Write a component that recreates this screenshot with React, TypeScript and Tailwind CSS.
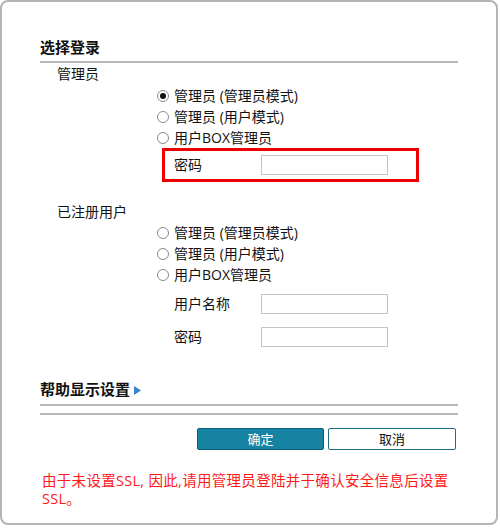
import React from "react";

const font = { fontFamily: '"Open Sans", "Noto Sans CJK SC", sans-serif' };

function Radio({ checked, label }: { checked?: boolean; label: string }) {
  return (
    <div className="flex h-[21px] items-center pl-[117px]">
      <span className="flex h-[12px] w-[12px] items-center justify-center rounded-full border border-[#8a8a8a] bg-white">
        {checked && <span className="h-[6px] w-[6px] rounded-full bg-[#111]" />}
      </span>
      <span className="ml-[5px] text-[14px] leading-[21px] text-[#111]">{label}</span>
    </div>
  );
}

function Field({ label }: { label: string }) {
  return (
    <div className="flex h-[20px] items-center pl-[134px]">
      <span className="w-[87px] text-[14px] leading-[20px] text-[#111]">{label}</span>
      <span className="h-[20px] w-[127px] border border-[#c4c4c4] bg-white" />
    </div>
  );
}

export default function App() {
  return (
    <div className="h-[528px] w-[500px] bg-white" style={font}>
      <div className="h-[525px] w-[498px] rounded-[8px] border-2 border-[#b4b4b4] bg-white px-[38px] pt-[36px]">
        <div className="border-b-2 border-[#b8b8b8] pb-[4px]">
          <div className="text-[15px] font-bold leading-[19px] text-[#111]">选择登录</div>
        </div>
        <div className="h-[22px] pl-[17px] text-[14px] leading-[22px] text-[#111]">管理员</div>
        <Radio checked label="管理员 (管理员模式)" />
        <Radio label="管理员 (用户模式)" />
        <Radio label="用户BOX管理员" />
        <div className="ml-[122px] flex h-[34px] w-[257px] items-center border-[3px] border-[#ee0000] pl-[9px]">
          <span className="w-[87px] text-[14px] leading-[20px] text-[#111]">密码</span>
          <span className="h-[20px] w-[127px] border border-[#c4c4c4] bg-white" />
        </div>
        <div className="mt-[19px] h-[21px] pl-[17px] text-[14px] leading-[21px] text-[#111]">已注册用户</div>
        <Radio label="管理员 (管理员模式)" />
        <Radio label="管理员 (用户模式)" />
        <Radio label="用户BOX管理员" />
        <div className="mt-[9px]">
          <Field label="用户名称" />
        </div>
        <div className="mt-[13px]">
          <Field label="密码" />
        </div>
        <div className="mt-[33px] flex h-[19px] items-center">
          <span className="text-[15px] font-bold leading-[19px] text-[#111]">帮助显示设置</span>
          <svg width="7" height="9" viewBox="0 0 7 9" className="ml-[4px] mt-[1px]">
            <path d="M0 0 L7 4.5 L0 9 Z" fill="#3a83c8" />
          </svg>
        </div>
        <div className="mt-[5px] border-b-2 border-[#b8b8b8]" />
        <div className="mt-[7px] border-b-2 border-[#b8b8b8]" />
        <div className="mt-[13px] flex justify-end gap-[4px] pr-[2px]">
          <button className="flex h-[22px] w-[127px] items-center justify-center rounded-[2px] border border-[#0d5f78] bg-[#1783a3] text-[13px] leading-[20px] text-white">
            确定
          </button>
          <button className="flex h-[22px] w-[128px] items-center justify-center rounded-[2px] border border-[#1d6e86] bg-white text-[13px] leading-[20px] text-[#111]">
            取消
          </button>
        </div>
        <div className="mt-[22px] pl-[2px] text-[14.5px] leading-[18px] tracking-[0.3px] text-[#ff1a1a]">
          <div className="whitespace-nowrap">由于未设置SSL, 因此,请用管理员登陆并于确认安全信息后设置</div>
          <div className="whitespace-nowrap">SSL。</div>
        </div>
      </div>
    </div>
  );
}
